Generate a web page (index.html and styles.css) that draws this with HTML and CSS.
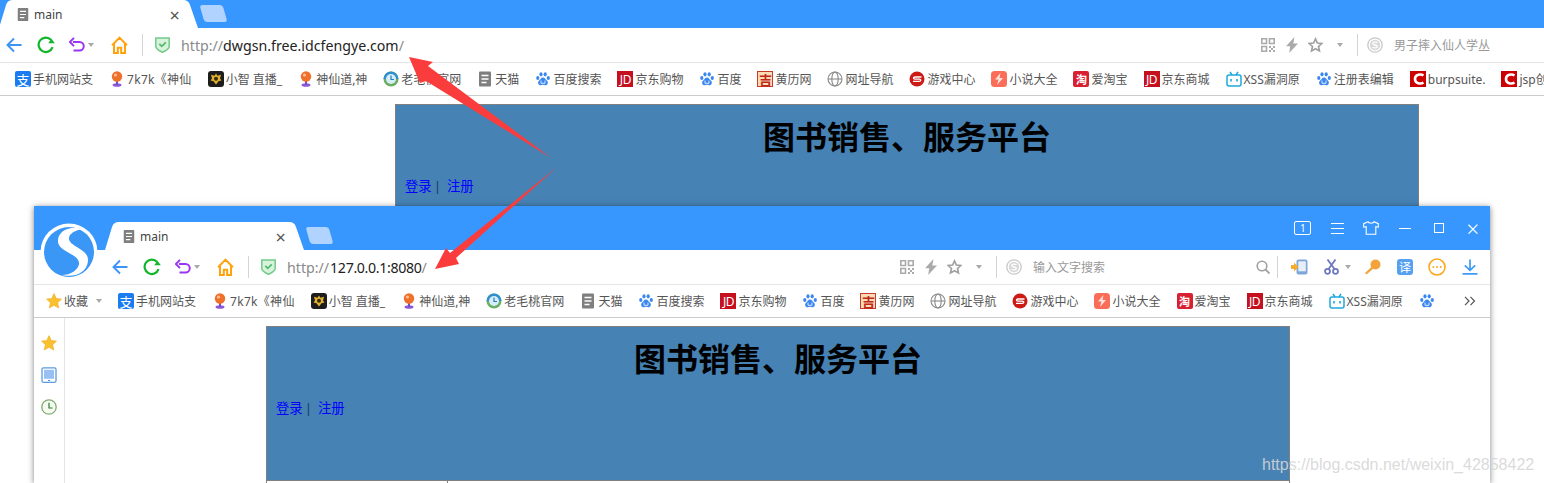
FILE: index.html
```html
<!DOCTYPE html>
<html lang="zh-CN">
<head>
    <meta charset="UTF-8">
    <title>main</title>
    <link rel="stylesheet" href="styles.css">
</head>
<body>
    <svg class="sprite" aria-hidden="true">
        <symbol id="i-doc" viewBox="0 0 16 16"><rect x="2" y="0.5" width="12" height="15" rx="1" fill="#7f7f7f"/><path d="M4.500 4.500h7M4.500 8h7M4.500 11.500h5" stroke="#fff" stroke-width="1.300"/></symbol>
        <symbol id="i-back" viewBox="0 0 16 16"><path d="M15.500 8H1.500M8 1.500L1.500 8 8 14.500" fill="none" stroke="#3d94f5" stroke-width="1.900"/></symbol>
        <symbol id="i-refresh" viewBox="0 0 18 18"><path d="M15.600 11.200A7.200 7.200 0 1 1 14 3.800" fill="none" stroke="#11b52a" stroke-width="2.200"/><path d="M11.200 7.300h6.600L14.500 2.800z" fill="#11b52a"/></symbol>
        <symbol id="i-undo" viewBox="0 0 16 16"><path d="M4 5h6.500a4.200 4.200 0 0 1 0 8.500H4.500" fill="none" stroke="#9a35f2" stroke-width="2"/><path d="M5 .9L.9 5 5 9.100" fill="none" stroke="#9a35f2" stroke-width="2"/></symbol>
        <symbol id="i-home" viewBox="0 0 16 17"><path d="M1 8.800L8 1.500l7 7.300M2.800 7v9h3.600v-5h3.200v5h3.600V7" fill="none" stroke="#ffa20c" stroke-width="1.900"/></symbol>
        <symbol id="i-shield" viewBox="0 0 15 16"><path d="M.8 1h13.400v8.500c0 2.800-4 4.500-6.700 5.800C4.800 14 .8 12.300.8 9.500z" fill="#d8f3dc" stroke="#74c98a" stroke-width="1.500"/><path d="M4.300 6.800l2.500 2.500 4-4" fill="none" stroke="#4fb96c" stroke-width="1.700"/></symbol>
        <symbol id="i-qr" viewBox="0 0 14 14"><path d="M.8.800h4.700v4.700H.8zM8.500.8h4.700v4.700H8.500zM.8 8.500h4.700v4.700H.8z" fill="none" stroke="#aaa" stroke-width="1.600"/><path d="M8 8h2v2H8zM12 8h2v2h-2zM10 10h2v2h-2zM8 12h2v2H8zM12 12h2v2h-2z" fill="#aaa"/></symbol>
        <symbol id="i-bolt" viewBox="0 0 12 16"><path d="M8.500 0L0 9.200h4.200L3.200 16 12 6.500H7.300z" fill="#aaa"/></symbol>
        <symbol id="i-star-line" viewBox="0 0 16 16"><path d="M8 1.500l2 4.400 4.700.5-3.500 3.200 1 4.700L8 11.900l-4.200 2.400 1-4.700L1.300 6.400 6 5.900z" fill="none" stroke="#a0a0a0" stroke-width="1.800"/></symbol>
        <symbol id="i-sogou" viewBox="0 0 16 16"><circle cx="8" cy="8" r="7.200" fill="none" stroke="#c8c8c8" stroke-width="1.300"/><circle cx="8" cy="8" r="5.200" fill="#d8d8d8"/><path d="M10.500 5.800C9 4.700 5.700 5 5.800 6.600c.1 1.800 4.500 1 4.500 2.900 0 1.700-3.400 1.700-4.900.8" fill="none" stroke="#fff" stroke-width="1.300"/></symbol>
        <symbol id="i-paw" viewBox="0 0 16 16"><g fill="#3b87f0"><ellipse cx="2.800" cy="7" rx="1.600" ry="2"/><ellipse cx="6" cy="3.300" rx="1.600" ry="2.100"/><ellipse cx="10.200" cy="3.300" rx="1.600" ry="2.100"/><ellipse cx="13.300" cy="7" rx="1.600" ry="2"/><path d="M8 6.500c2 0 2.500 2 4 3.200 1.700 1.500.8 4.800-2 4.500-1 0-1.300-.4-2-.4s-1 .4-2 .4c-2.800.3-3.700-3-2-4.500C5.500 8.500 6 6.500 8 6.500z"/></g><path d="M6 9.500v2.800h4V9.500" fill="none" stroke="#fff" stroke-width=".8"/></symbol>
        <symbol id="i-pin" viewBox="0 0 16 16"><ellipse cx="8" cy="14" rx="4.500" ry="1.800" fill="#8a5ad8"/><path d="M7 9h2v5H7z" fill="#7a4bc8"/><circle cx="8" cy="5.500" r="5.200" fill="#f0702a"/><circle cx="6.500" cy="4" r="1.600" fill="#fbbf98"/></symbol>
        <symbol id="i-zhi" viewBox="0 0 16 16"><rect width="16" height="16" rx="3" fill="#1d1d1d"/><path d="M8 2.500l1.500 2.300 3.500-1-1 3.700 1.500 2-3 .7L8 13.500l-2.500-3.300-3-.7 1.500-2-1-3.700 3.500 1z" fill="#e0b030"/><circle cx="8" cy="7.800" r="2" fill="#3a2a10"/></symbol>
        <symbol id="i-mao" viewBox="0 0 16 16"><circle cx="8" cy="8" r="7.500" fill="#6aaf62"/><path d="M8 .5a7.500 7.500 0 0 1 7.500 7.500H.5A7.500 7.500 0 0 1 8 .5z" fill="#2f8fd0"/><circle cx="8" cy="8" r="5" fill="#d7eefa"/><path d="M8 4.500V8.500h3" fill="none" stroke="#2b7ab8" stroke-width="1.200"/></symbol>
        <symbol id="i-globe" viewBox="0 0 16 16"><g fill="none" stroke="#8a8a8a" stroke-width="1.100"><circle cx="8" cy="8" r="7"/><ellipse cx="8" cy="8" rx="3.200" ry="7"/><path d="M1 8h14"/></g></symbol>
        <symbol id="i-game" viewBox="0 0 16 16"><circle cx="8" cy="8" r="7.500" fill="#cc1a14"/><path d="M12.500 6H6.200C4 6 4 8.200 6 8.200h4.300c2 0 2 2.200-.2 2.200H4" fill="none" stroke="#fff" stroke-width="1.300"/></symbol>
        <symbol id="i-novel" viewBox="0 0 16 16"><rect width="16" height="16" rx="3.500" fill="#fa6d58"/><path d="M9.500 2L4 8.500h3.500L6 14l6-7H8.500z" fill="#ffe4de"/></symbol>
        <symbol id="i-bili" viewBox="0 0 16 16"><rect x="1" y="4" width="14" height="11" rx="2" fill="none" stroke="#1fa8dc" stroke-width="1.500"/><path d="M4 .8L6 4M12 .8L10 4" stroke="#1fa8dc" stroke-width="1.500"/><path d="M5 8v2.500M11 8v2.500" stroke="#1fa8dc" stroke-width="1.600"/></symbol>
        <symbol id="i-burp" viewBox="0 0 16 16"><rect width="16" height="16" fill="#cc0000"/><path d="M13.500 4.500C11 2.800 5 3.200 5 8s6 5.200 8.500 3.500" fill="none" stroke="#fff" stroke-width="2.600"/></symbol>
        <symbol id="i-star" viewBox="0 0 16 16"><path d="M8 .6l2.300 5 5.200.5-3.900 3.600 1.200 5.300L8 12.300 3.200 15l1.200-5.300L.5 6.100l5.200-.5z" fill="#fbc02d" stroke="#eda820" stroke-width=".6"/></symbol>
        <symbol id="i-pad" viewBox="0 0 16 16"><rect x="1" y=".8" width="14" height="14.500" rx="1.500" fill="#fff" stroke="#5b9ae0" stroke-width="1.300"/><rect x="3" y="2.800" width="10" height="9" fill="#98c0f4"/><path d="M7 13.500h2" stroke="#4a8ad8"/></symbol>
        <symbol id="i-clock" viewBox="0 0 16 16"><circle cx="8" cy="8" r="7.200" fill="#f5fbef" stroke="#82ab74" stroke-width="1.300"/><path d="M8 3.800V9h3.500" fill="none" stroke="#2c7a2c" stroke-width="1.200"/></symbol>
        <symbol id="i-search" viewBox="0 0 14 14"><circle cx="6" cy="6" r="4.800" fill="none" stroke="#a0a0a0" stroke-width="1.600"/><path d="M9.500 9.500l4 4" stroke="#a0a0a0" stroke-width="1.800"/></symbol>
        <symbol id="i-phone" viewBox="0 0 17 16"><rect x="5.500" y=".5" width="11" height="15" rx="2" fill="#7ea6d8"/><rect x="7.300" y="2.300" width="7.500" height="10" fill="#e6effa"/><path d="M0 6h3V3.500L7.500 8 3 12.500V10H0z" fill="#f7ac30"/></symbol>
        <symbol id="i-cut" viewBox="0 0 15 16"><g fill="none" stroke="#6e78c0" stroke-width="1.800"><circle cx="3.500" cy="12.300" r="2.500"/><circle cx="11.500" cy="12.300" r="2.500"/><path d="M4.500 10L11.500 .5M10.500 10L3.500 .5"/></g></symbol>
        <symbol id="i-key" viewBox="0 0 17 16"><circle cx="11.500" cy="5.500" r="5" fill="#f2a33c"/><path d="M8.500 7L1 14l1.500 1.500L10 9z" fill="#f2a33c"/></symbol>
        <symbol id="i-smile" viewBox="0 0 18 18"><circle cx="9" cy="9" r="8" fill="#fff" stroke="#fca81f" stroke-width="1.600"/><circle cx="5.300" cy="9" r="1" fill="#fca81f"/><circle cx="9" cy="9" r="1" fill="#fca81f"/><circle cx="12.700" cy="9" r="1" fill="#fca81f"/></symbol>
        <symbol id="i-down" viewBox="0 0 16 16"><path d="M8 .5v10.500M2.800 6.300L8 11.300l5.200-5M.5 14.800h15" fill="none" stroke="#3d9bf7" stroke-width="1.700"/></symbol>
        <symbol id="i-shirt" viewBox="0 0 16 14"><path d="M5 .7L.7 2.700v3.500l2.500-.5v7.600h9.600V5.700l2.500.5V2.700L11 .7c-.5 2-5.500 2-6 0z" fill="none" stroke="#fff" stroke-width="1.100"/></symbol>
    </svg>

    <!-- window behind -->
    <div class="window">
        <div class="tabstrip">
            <div class="tab">
                <svg class="tab-icon"><use href="#i-doc"/></svg>
                <span class="tab-title">main</span>
                <span class="tab-close">×</span>
            </div>
            <div class="new-tab"></div>
        </div>
        <div class="toolbar">
            <svg class="ic16"><use href="#i-back"/></svg>
            <svg class="ic18 nav-refresh"><use href="#i-refresh"/></svg>
            <svg class="ic16 nav-undo"><use href="#i-undo"/></svg>
            <span class="caret nav-caret"></span>
            <svg class="ic-home nav-home"><use href="#i-home"/></svg>
            <span class="sep nav-sep"></span>
            <svg class="ic15 nav-shield"><use href="#i-shield"/></svg>
            <div class="url"><span class="scheme">http://</span>dwgsn.free.idcfengye.com<span class="scheme">/</span></div>
            <svg class="ic14"><use href="#i-qr"/></svg>
            <svg class="ic-bolt"><use href="#i-bolt"/></svg>
            <svg class="ic15 addr-star"><use href="#i-star-line"/></svg>
            <span class="caret addr-caret"></span>
            <span class="sep addr-sep"></span>
            <svg class="ic16 addr-sogou"><use href="#i-sogou"/></svg>
            <div class="search search-back">男子摔入仙人学丛</div>
        </div>
        <div class="bookmarks">
            <a class="bm"><span class="fav fav-ali">支</span>手机网站支</a>
            <a class="bm bm-7k"><svg class="ic16"><use href="#i-pin"/></svg>7k7k《神仙</a>
            <a class="bm"><svg class="ic16"><use href="#i-zhi"/></svg>小智 直播_</a>
            <a class="bm"><svg class="ic16"><use href="#i-pin"/></svg>神仙道,神</a>
            <a class="bm"><svg class="ic16"><use href="#i-mao"/></svg>老毛桃官网</a>
            <a class="bm"><svg class="ic16"><use href="#i-doc"/></svg>天猫</a>
            <a class="bm"><svg class="ic16"><use href="#i-paw"/></svg>百度搜索</a>
            <a class="bm"><span class="fav fav-jd">JD</span>京东购物</a>
            <a class="bm"><svg class="ic16"><use href="#i-paw"/></svg>百度</a>
            <a class="bm"><span class="fav fav-ji">吉</span>黄历网</a>
            <a class="bm"><svg class="ic16"><use href="#i-globe"/></svg>网址导航</a>
            <a class="bm"><svg class="ic16"><use href="#i-game"/></svg>游戏中心</a>
            <a class="bm"><svg class="ic16"><use href="#i-novel"/></svg>小说大全</a>
            <a class="bm"><span class="fav fav-tao">淘</span>爱淘宝</a>
            <a class="bm"><span class="fav fav-jd">JD</span>京东商城</a>
            <a class="bm"><svg class="ic16"><use href="#i-bili"/></svg>XSS漏洞原</a>
            <a class="bm"><svg class="ic16"><use href="#i-paw"/></svg>注册表编辑</a>
            <a class="bm"><svg class="ic16"><use href="#i-burp"/></svg>burpsuite.</a>
            <a class="bm"><svg class="ic16"><use href="#i-burp"/></svg>jsp创</a>
        </div>
        <div class="page page-back">
            <div class="panel">
                <h1>图书销售、服务平台</h1>
                <p class="links"><a href="#">登录</a><span class="bar">|</span><a href="#">注册</a></p>
            </div>
        </div>
    </div>

    <!-- window in front -->
    <div class="window window-front">
        <div class="tabstrip">
            <div class="tab">
                <svg class="tab-icon"><use href="#i-doc"/></svg>
                <span class="tab-title">main</span>
                <span class="tab-close">×</span>
            </div>
            <div class="new-tab"></div>
            <div class="win-controls">
                <span class="win-count">1</span>
                <span class="win-menu"></span>
                <svg class="win-shirt"><use href="#i-shirt"/></svg>
                <span class="win-min"></span>
                <span class="win-max"></span>
                <span class="win-close">×</span>
            </div>
        </div>
        <svg class="logo" viewBox="0 0 58 58">
            <circle cx="29" cy="29" r="28.500" fill="#fff"/>
            <circle cx="29" cy="29" r="25" fill="#3a97f5"/>
            <path d="M43 6C30 2 17 8 18 19c1 10 22 12 21 22-1 6-8 11-17 11 12 3 25-2 26-14 1-12-18-14-19-22-.5-5 6-9 14-10z" fill="#fff"/>
        </svg>
        <div class="toolbar">
            <svg class="ic16"><use href="#i-back"/></svg>
            <svg class="ic18 nav-refresh"><use href="#i-refresh"/></svg>
            <svg class="ic16 nav-undo"><use href="#i-undo"/></svg>
            <span class="caret nav-caret"></span>
            <svg class="ic-home nav-home"><use href="#i-home"/></svg>
            <span class="sep nav-sep"></span>
            <svg class="ic15 nav-shield"><use href="#i-shield"/></svg>
            <div class="url"><span class="scheme">http://</span><span class="host-ip">127.0.0.1:8080</span><span class="scheme">/</span></div>
            <svg class="ic14"><use href="#i-qr"/></svg>
            <svg class="ic-bolt"><use href="#i-bolt"/></svg>
            <svg class="ic15 addr-star"><use href="#i-star-line"/></svg>
            <span class="caret addr-caret"></span>
            <span class="sep addr-sep"></span>
            <svg class="ic16 addr-sogou"><use href="#i-sogou"/></svg>
            <div class="search">输入文字搜索</div>
            <svg class="ic14"><use href="#i-search"/></svg>
            <span class="sep tool-sep"></span>
            <svg class="ic-phone"><use href="#i-phone"/></svg>
            <svg class="ic15 tool-cut"><use href="#i-cut"/></svg>
            <span class="caret tool-caret"></span>
            <svg class="ic-phone tool-key"><use href="#i-key"/></svg>
            <span class="fav fav-yi">译</span>
            <svg class="ic18 tool-smile"><use href="#i-smile"/></svg>
            <svg class="ic16 tool-down"><use href="#i-down"/></svg>
        </div>
        <div class="bookmarks bookmarks-front">
            <a class="bm"><svg class="ic16"><use href="#i-star"/></svg>收藏<span class="caret fav-caret"></span></a>
            <a class="bm"><span class="fav fav-ali">支</span>手机网站支</a>
            <a class="bm bm-7k"><svg class="ic16"><use href="#i-pin"/></svg>7k7k《神仙</a>
            <a class="bm"><svg class="ic16"><use href="#i-zhi"/></svg>小智 直播_</a>
            <a class="bm"><svg class="ic16"><use href="#i-pin"/></svg>神仙道,神</a>
            <a class="bm"><svg class="ic16"><use href="#i-mao"/></svg>老毛桃官网</a>
            <a class="bm"><svg class="ic16"><use href="#i-doc"/></svg>天猫</a>
            <a class="bm"><svg class="ic16"><use href="#i-paw"/></svg>百度搜索</a>
            <a class="bm"><span class="fav fav-jd">JD</span>京东购物</a>
            <a class="bm"><svg class="ic16"><use href="#i-paw"/></svg>百度</a>
            <a class="bm"><span class="fav fav-ji">吉</span>黄历网</a>
            <a class="bm"><svg class="ic16"><use href="#i-globe"/></svg>网址导航</a>
            <a class="bm"><svg class="ic16"><use href="#i-game"/></svg>游戏中心</a>
            <a class="bm"><svg class="ic16"><use href="#i-novel"/></svg>小说大全</a>
            <a class="bm"><span class="fav fav-tao">淘</span>爱淘宝</a>
            <a class="bm"><span class="fav fav-jd">JD</span>京东商城</a>
            <a class="bm"><svg class="ic16"><use href="#i-bili"/></svg>XSS漏洞原</a>
            <a class="bm"><svg class="ic16"><use href="#i-paw"/></svg></a>
            <svg class="more" viewBox="0 0 12 10"><path d="M1 .8L5 5 1 9.200M6.500.8L10.500 5 6.500 9.200" fill="none" stroke="#555" stroke-width="1.200"/></svg>
        </div>
        <div class="body-row">
            <div class="sidebar">
                <svg class="ic16"><use href="#i-star"/></svg>
                <svg class="ic16"><use href="#i-pad"/></svg>
                <svg class="ic16"><use href="#i-clock"/></svg>
            </div>
            <div class="page page-front">
                <div class="panel">
                    <h1>图书销售、服务平台</h1>
                    <p class="links"><a href="#">登录</a><span class="bar">|</span><a href="#">注册</a></p>
                </div>
                <div class="panel-table">
                    <div class="cell-side"></div>
                    <div class="cell-main"></div>
                </div>
            </div>
        </div>
    </div>

    <!-- red arrows drawn on the screenshot -->
    <svg class="arrows" viewBox="0 0 1544 483">
        <path d="M409 57L433 62 428 66 551 158 426 81 420 83z" fill="#fb3c3c"/>
        <path d="M557 167L456 258 459 264 435 269 446 248 450 253z" fill="#fb3c3c"/>
    </svg>

    <div class="watermark">https://blog.csdn.net/weixin_42858422</div>
</body>
</html>
```

FILE: styles.css
```css
* {
    margin: 0;
    padding: 0;
    box-sizing: border-box;
}

body {
    position: relative;
    width: 1544px;
    height: 483px;
    overflow: hidden;
    background: #fff;
    font-family: "Noto Sans", "Noto Sans CJK SC", sans-serif;
    color: #555;
}

.sprite {
    display: none;
}

svg {
    flex: none;
    display: block;
}

.ic14 { width: 14px; height: 14px; }
.ic15 { width: 15px; height: 16px; }
.ic16 { width: 16px; height: 16px; }
.ic18 { width: 18px; height: 18px; }
.ic-home { width: 17px; height: 18px; }
.ic-bolt { width: 12px; height: 16px; margin-left: 11px; }
.ic-phone { width: 17px; height: 16px; margin-left: 13px; }

/* windows */
.window {
    background: #fff;
}

.window-front {
    position: absolute;
    left: 34px;
    top: 206px;
    width: 1456px;
    height: 277px;
    padding-top: 16px;
    background: linear-gradient(#3797ff 44px, #fff 44px);
    box-shadow: 0 1px 6px rgba(0, 0, 0, 0.5);
}

.tabstrip {
    position: relative;
    display: flex;
    align-items: flex-start;
    height: 28px;
    background: #3797ff;
}

.tab {
    display: flex;
    align-items: center;
    width: 199px;
    height: 28px;
    margin-left: -1px;
    padding: 1px 0 0 16px;
    background: #fff;
    clip-path: path("M0 28 L7 5 Q8.500 0 14 0 L184 0 Q189.500 0 191 5 L199 28 Z");
}

.window-front .tab {
    margin-left: 71px;
}

.tab-icon {
    width: 14px;
    height: 15px;
    margin-left: 1px;
}

.tab-title {
    margin-left: 4px;
    font-size: 12px;
    color: #444;
}

.tab-close {
    margin-left: 107px;
    font-size: 18px;
    line-height: 28px;
    color: #555;
}

.new-tab {
    width: 23px;
    height: 17px;
    margin: 5px 0 0 4px;
    background: #b0d4ff;
    border-radius: 3px;
    transform: skewX(16deg);
}

.win-controls {
    position: absolute;
    right: 0;
    top: -1px;
    display: flex;
    align-items: center;
    height: 14px;
    color: #fff;
}

.win-count {
    width: 17px;
    height: 14px;
    border: 1px solid #fff;
    border-radius: 2px;
    font-size: 10px;
    line-height: 12px;
    text-align: center;
}

.win-menu {
    width: 13px;
    height: 11px;
    margin-left: 20px;
    border-top: 1px solid #fff;
    border-bottom: 1px solid #fff;
    background: linear-gradient(#fff, #fff) center / 100% 1px no-repeat;
}

.win-shirt {
    width: 16px;
    height: 14px;
    margin-left: 19px;
}

.win-min {
    width: 12px;
    height: 1px;
    margin-left: 20px;
    background: #fff;
}

.win-max {
    width: 10px;
    height: 10px;
    margin-left: 23px;
    border: 1px solid #fff;
}

.win-close {
    margin: 0 11px 0 22px;
    font-size: 22px;
    font-weight: 300;
    line-height: 14px;
}

.logo {
    position: absolute;
    left: 6px;
    top: 17px;
    width: 58px;
    height: 58px;
}

/* toolbar */
.toolbar {
    display: flex;
    align-items: center;
    height: 35px;
    padding-left: 6px;
    border-bottom: 1px solid #e5e5e5;
}

.window-front .toolbar {
    padding-left: 78px;
}

.nav-refresh { margin-left: 15px; }
.nav-undo { margin-left: 14px; }
.nav-caret { margin-left: 3px; }
.nav-home { margin-left: 17px; }
.nav-sep { margin-left: 14px; }
.nav-shield { margin-left: 12px; }

.url {
    flex: 1;
    margin-left: 11px;
    font-size: 14.200px;
    color: #222;
    white-space: nowrap;
}

.scheme {
    color: #8a8a8a;
}

.host-ip {
    margin-left: 1px;
    letter-spacing: -0.35px;
}

.caret {
    flex: none;
    width: 0;
    height: 0;
    border: 3px solid transparent;
    border-top: 4px solid #a9a9a9;
    border-bottom: 0;
}

.sep {
    flex: none;
    width: 1px;
    height: 22px;
    background: #d5d5d5;
}

.addr-star { margin-left: 10px; }
.addr-caret { margin-left: 14px; }
.addr-sep { margin-left: 14px; }
.addr-sogou { margin-left: 9px; }
.tool-sep { margin-left: 7px; }
.tool-cut { margin-left: 16px; }
.tool-caret { margin-left: 6px; }
.tool-key { margin-left: 13px; }
.tool-smile { margin-left: 15px; }
.tool-down { margin: 0 12px 0 16px; }

.search {
    flex: none;
    width: 223px;
    margin-left: 11px;
    font-size: 12px;
    color: #999;
    white-space: nowrap;
}

.search-back {
    width: 150px;
}

/* bookmarks */
.bookmarks {
    display: flex;
    align-items: center;
    gap: 16px;
    height: 33px;
    padding-left: 15px;
    border-bottom: 1px solid #ccc;
    overflow: hidden;
}

.bookmarks-front {
    padding-left: 12px;
    padding-right: 14px;
}

.bm {
    display: flex;
    flex: none;
    align-items: center;
    gap: 2px;
    font-size: 12px;
    color: #555;
    white-space: pre;
}

.bm-7k {
    letter-spacing: 0.3px;
}

.fav-caret {
    margin-left: 6px;
}

.more {
    width: 12px;
    height: 10px;
    margin-left: auto;
}

.fav {
    display: flex;
    flex: none;
    align-items: center;
    justify-content: center;
    width: 16px;
    height: 16px;
    font-size: 11px;
    color: #fff;
}

.fav-ali { background: #1a7cf0; border-radius: 2px; font-size: 13px; }
.fav-jd { background: #c5101f; letter-spacing: -0.5px; font-size: 12px; }
.fav-ji { background: #fbdcb4; border: 1px solid #c83a2a; color: #c0281a; font-size: 13px; font-weight: 700; }
.fav-tao { background: #d82030; border-radius: 2px; font-weight: 700; }
.fav-yi { background: #56a0f2; border-radius: 3px; margin-left: 16px; font-size: 12px; }

/* page content */
.page {
    flex: 1;
    padding-top: 8px;
}

.page-back {
    padding-left: 395px;
}

.page-front {
    padding-left: 201px;
}

.panel {
    width: 1024px;
    height: 154px;
    padding: 9px 9px 0;
    border: 1px solid #808080;
    border-bottom: 0;
    background: #4682b4;
}

.panel h1 {
    font-size: 32px;
    font-weight: 700;
    line-height: 46px;
    text-align: center;
    color: #000;
}

.links {
    margin-top: 17px;
    font-size: 13.330px;
    line-height: 19px;
    color: #000;
}

.links a {
    color: #0000ff;
    text-decoration: none;
}

.bar {
    margin: 0 6px 0 2px;
    color: #143c5a;
}

.panel-table {
    display: flex;
    width: 1024px;
    height: 40px;
    border: 1px solid #808080;
    background: #fff;
}

.cell-side {
    width: 181px;
    border-right: 1px solid #808080;
}

.body-row {
    display: flex;
    height: 165px;
    overflow: hidden;
}

.sidebar {
    display: flex;
    flex: none;
    flex-direction: column;
    align-items: center;
    gap: 16px;
    width: 31px;
    padding: 17px 0 0;
    border-right: 1px solid #e5e5e5;
}

/* things lying over the windows */
.arrows {
    position: absolute;
    left: 0;
    top: 0;
    width: 1544px;
    height: 483px;
}

.watermark {
    position: absolute;
    left: 1262px;
    top: 455px;
    font-family: "Liberation Sans", sans-serif;
    font-size: 16px;
    line-height: 20px;
    color: rgba(214, 214, 214, 0.9);
}
```
